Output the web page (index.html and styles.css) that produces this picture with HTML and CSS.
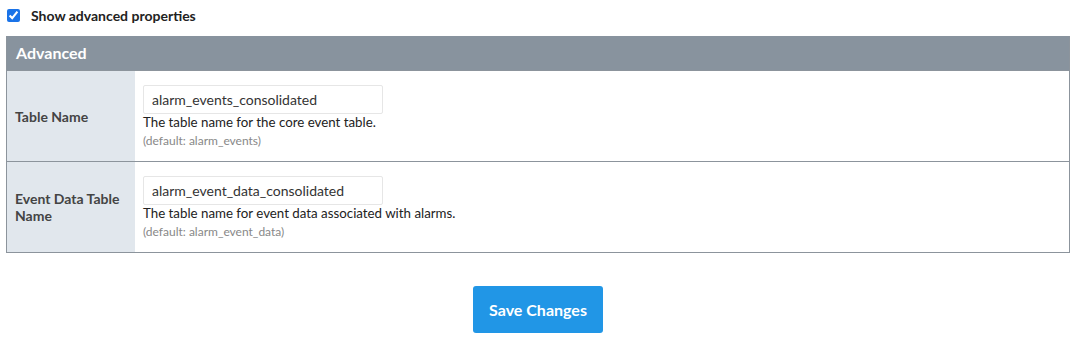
FILE: index.html
```html
<!DOCTYPE html>
<html>
<head>
<meta charset="utf-8">
<link rel="stylesheet" href="styles.css">
</head>
<body>
<div class="page">
  <label class="toggle">
    <input type="checkbox" checked>
    <span>Show advanced properties</span>
  </label>
  <div class="panel">
    <div class="panel-head">Advanced</div>
    <div class="row">
      <div class="label">Table Name</div>
      <div class="field">
        <input class="text" type="text" value="alarm_events_consolidated">
        <div class="desc">The table name for the core event table.</div>
        <div class="def">(default: alarm_events)</div>
      </div>
    </div>
    <div class="row">
      <div class="label">Event Data Table Name</div>
      <div class="field">
        <input class="text" type="text" value="alarm_event_data_consolidated">
        <div class="desc">The table name for event data associated with alarms.</div>
        <div class="def">(default: alarm_event_data)</div>
      </div>
    </div>
  </div>
  <div class="actions">
    <button class="save">Save Changes</button>
  </div>
</div>
</body>
</html>
```
FILE: styles.css
```css
html, body {
  margin: 0;
  padding: 0;
  background: #fff;
}
body {
  font-family: "Lato", "Liberation Sans", sans-serif;
  color: #333;
}
.page {
  padding: 6px 9px 0 6px;
}
.toggle {
  display: flex;
  align-items: center;
  gap: 11px;
  height: 18px;
  font-size: 14px;
  font-weight: bold;
  color: #222;
}
.toggle input {
  margin: 0 0 0 1px;
  width: 13px;
  height: 13px;
  accent-color: #1a73e8;
}
.panel {
  margin-top: 12px;
  border: 1px solid #8c949c;
  border-top: none;
}
.panel-head {
  background: #88939e;
  color: #fff;
  font-weight: bold;
  font-size: 16px;
  height: 34px;
  line-height: 34px;
  padding-left: 9px;
}
.row {
  display: flex;
  border-top: 1px solid #8c949c;
}
.row:first-of-type {
  border-top: none;
}
.label {
  width: 128px;
  box-sizing: border-box;
  background: #e1e7ed;
  padding: 0 8px;
  display: flex;
  align-items: center;
  font-size: 14px;
  font-weight: bold;
  color: #444;
  line-height: 17px;
}
.field {
  flex: 1;
  padding: 14px 8px 13px 8px;
}
.text {
  display: block;
  width: 240px;
  height: 29px;
  box-sizing: border-box;
  border: 1px solid #e6e6e6;
  border-radius: 2px;
  padding: 0 8px;
  font-family: inherit;
  font-size: 14px;
  color: #333;
  outline: none;
}
.desc {
  font-size: 13.3px;
  color: #222;
  line-height: 16px;
}
.def {
  font-size: 12px;
  color: #888;
  margin-top: 4px;
  line-height: 14px;
}
.actions {
  display: flex;
  justify-content: center;
  padding-top: 33px;
}
.save {
  width: 130px;
  height: 47px;
  border: none;
  border-radius: 3px;
  background: #2196e6;
  color: #fff;
  font-family: inherit;
  font-size: 16px;
  font-weight: bold;
}
```
